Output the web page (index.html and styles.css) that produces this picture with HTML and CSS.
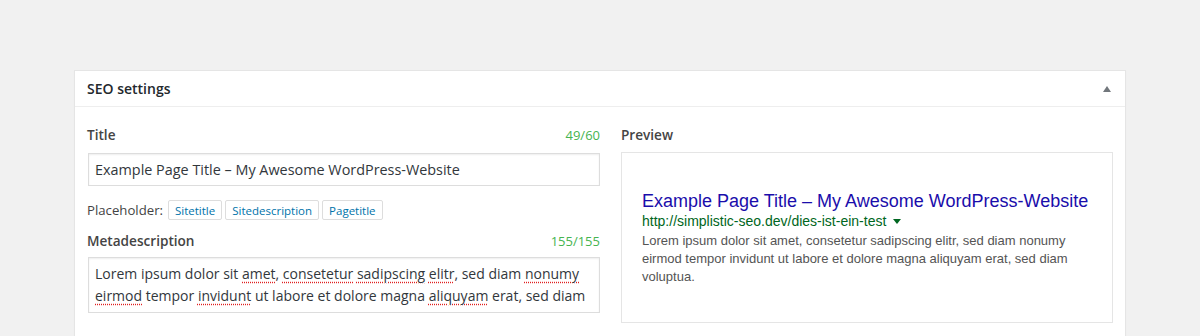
FILE: index.html
```html
<!DOCTYPE html>
<html lang="en">
<head>
  <meta charset="UTF-8">
  <title>SEO settings</title>
  <link rel="stylesheet" href="styles.css">
</head>
<body>
  <div class="wrap">
    <!-- SEO settings box -->
    <div class="postbox">
      <div class="postbox-header">
        <h2 class="postbox-title">SEO settings</h2>
        <span class="toggle-arrow"></span>
      </div>

      <div class="postbox-inside">
        <div class="seo-fields">
          <div class="field-head">
            <label class="field-label">Title</label>
            <span class="counter">49/60</span>
          </div>
          <div class="text-input">Example Page Title – My Awesome WordPress-Website</div>

          <div class="placeholder-row">
            <span class="placeholder-label">Placeholder:</span>
            <button class="ph-btn">Sitetitle</button>
            <button class="ph-btn">Sitedescription</button>
            <button class="ph-btn">Pagetitle</button>
          </div>

          <div class="field-head meta-head">
            <label class="field-label">Metadescription</label>
            <span class="counter">155/155</span>
          </div>
          <div class="text-area">
            <p class="ta-line">Lorem ipsum dolor sit <span class="typo">amet</span>, <span class="typo">consetetur</span> <span class="typo">sadipscing</span> <span class="typo">elitr</span>, sed diam <span class="typo">nonumy</span></p>
            <p class="ta-line"><span class="typo">eirmod</span> tempor <span class="typo">invidunt</span> ut labore et dolore magna <span class="typo">aliquyam</span> erat, sed diam</p>
          </div>
        </div>

        <div class="seo-preview">
          <div class="field-head">
            <label class="field-label">Preview</label>
          </div>
          <div class="serp-box">
            <div class="serp">
              <div class="serp-title">Example Page Title – My Awesome WordPress-Website</div>
              <div class="serp-url">http://simplistic-seo.dev/dies-ist-ein-test <span class="url-arrow"></span></div>
              <div class="serp-desc">Lorem ipsum dolor sit amet, consetetur sadipscing elitr, sed diam nonumy eirmod tempor invidunt ut labore et dolore magna aliquyam erat, sed diam voluptua.</div>
            </div>
          </div>
        </div>
      </div>
    </div>
  </div>
</body>
</html>
```

FILE: styles.css
```css
body {
  margin: 0;
  background-color: #f1f1f1;
  font-family: "Open Sans", "Liberation Sans", sans-serif;
  color: #32373c;
}

.wrap {
  padding: 70px 74px 0;
}

/* box */
.postbox {
  background: #fff;
  border: 1px solid #e5e5e5;
  box-shadow: 0 1px 1px rgba(0, 0, 0, 0.04);
}

.postbox-header {
  display: flex;
  justify-content: space-between;
  align-items: center;
  height: 35px;
  padding: 0 14px 0 12px;
  border-bottom: 1px solid #eee;
}

.postbox-title {
  margin: 0;
  font-size: 14px;
  font-weight: 600;
  color: #23282d;
}

/* kleiner Pfeil rechts */
.toggle-arrow {
  width: 0;
  height: 0;
  border-left: 4.5px solid transparent;
  border-right: 4.5px solid transparent;
  border-bottom: 6px solid #72777c;
}

.postbox-inside {
  display: grid;
  grid-template-columns: 513px 1fr;
  column-gap: 21px;
  padding: 18px 12px 20px;
}

.field-head {
  display: flex;
  justify-content: space-between;
  align-items: center;
  height: 20px;
  line-height: 20px;
}

.field-label {
  font-size: 13.6px;
  font-weight: 600;
  color: #444;
}

.counter {
  font-size: 13px;
  color: #46b450;
}

.text-input {
  margin: 8px 0 0 1px;
  height: 31px;
  line-height: 31px;
  padding: 0 6px;
  border: 1px solid #ddd;
  box-shadow: inset 0 1px 2px rgba(0, 0, 0, 0.07);
  font-size: 14.4px;
  color: #32373c;
}

.placeholder-row {
  display: flex;
  align-items: center;
  gap: 3px;
  margin-top: 14px;
  height: 20px;
}

.placeholder-label {
  font-size: 13.2px;
  color: #444;
  margin-right: 2px;
}

.ph-btn {
  height: 20px;
  padding: 0 6px;
  border: 1px solid #ddd;
  border-radius: 2px;
  background: #fff;
  font-family: "Open Sans", "Liberation Sans", sans-serif;
  font-size: 11.5px;
  color: #0073aa;
}

.meta-head {
  margin-top: 11px;
}

.text-area {
  margin: 6px 0 0 1px;
  height: 49px;
  padding: 5px 6px 0;
  border: 1px solid #ddd;
  box-shadow: inset 0 1px 2px rgba(0, 0, 0, 0.07);
  font-size: 14px;
  line-height: 22px;
  color: #32373c;
}

.ta-line {
  margin: 0;
  white-space: nowrap;
}

.typo {
  text-decoration: underline dotted #e02020;
  text-underline-offset: 3px;
}

/* Vorschau */
.serp-box {
  margin-top: 7px;
  height: 169px;
  border: 1px solid #e5e5e5;
  display: flex;
  align-items: center;
  padding: 0 14px 0 20px;
}

.serp {
  font-family: "Liberation Sans", Arial, sans-serif;
}

.serp-title {
  font-size: 18px;
  line-height: 22px;
  color: #1a0dab;
}

.serp-url {
  font-size: 14px;
  line-height: 19px;
  color: #006621;
}

.url-arrow {
  display: inline-block;
  width: 0;
  height: 0;
  margin-left: 3px;
  vertical-align: middle;
  border-left: 4px solid transparent;
  border-right: 4px solid transparent;
  border-top: 5px solid #006621;
}

.serp-desc {
  margin-top: 1px;
  font-size: 13px;
  line-height: 18px;
  color: #545454;
}
```
